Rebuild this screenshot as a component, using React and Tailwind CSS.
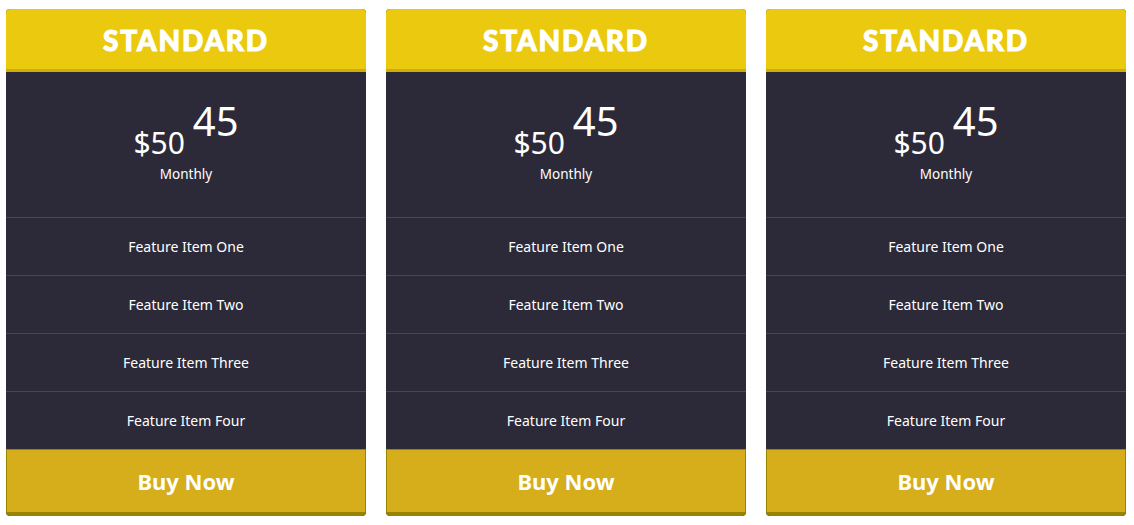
import React from "react";

const features = ["Feature Item One", "Feature Item Two", "Feature Item Three", "Feature Item Four"];

function Card() {
  return (
    <div className="w-[360px] flex flex-col rounded-[4px] overflow-hidden bg-[#2c2a39]">
      <div className="h-[63px] bg-[#eac90f] border-b-[3px] border-[#cdac0b] flex items-center justify-center">
        <span className="text-white text-[28px] font-black tracking-[1.8px] font-['Lato',sans-serif] leading-none [-webkit-text-stroke:1px_white] mt-[2px]">STANDARD</span>
      </div>
      <div className="h-[145px] flex flex-col items-center pt-[29px] text-white font-['Noto_Sans',sans-serif]">
        <div className="flex items-start">
          <span className="text-[30px] leading-none mt-[27px]">$50</span>
          <span className="text-[40px] leading-none ml-[8px]">45</span>
        </div>
        <span className="text-[13.5px] leading-none mt-[10px]">Monthly</span>
      </div>
      {features.map((f) => (
        <div key={f} className="h-[58px] border-t border-[#47455a] flex items-center justify-center text-white text-[14px] font-['Noto_Sans',sans-serif]">
          {f}
        </div>
      ))}
      <div className="h-[67px] bg-[#d6ad1b] border-x border-t border-b-[4px] border-[#988400] rounded-b-[4px] flex items-center justify-center">
        <span className="text-white text-[22px] font-bold font-['Noto_Sans',sans-serif] leading-none">Buy Now</span>
      </div>
    </div>
  );
}

export default function App() {
  return (
    <div className="w-[1134px] h-[525px] bg-white flex items-start gap-[20px] pl-[6px] pt-[9px]">
      <Card />
      <Card />
      <Card />
    </div>
  );
}
